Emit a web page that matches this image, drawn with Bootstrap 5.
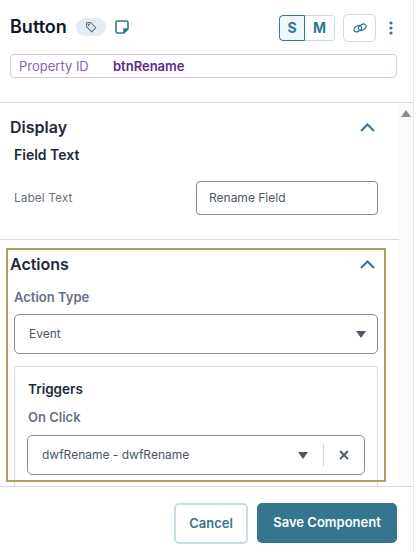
<!DOCTYPE html>
<html lang="en">
<head>
<meta charset="utf-8">
<title>Button</title>
<link href="https://cdn.jsdelivr.net/npm/bootstrap@5.3.0/dist/css/bootstrap.min.css" rel="stylesheet">
<style>
html,body{margin:0;height:552px;overflow:hidden;background:#fff}
body{font-family:Inter,"Liberation Sans",sans-serif;color:#1e293b}
.shell{width:414px;height:552px;border-right:1px solid #e4e8eb}
.head{height:103px;padding:14px 14px 0 10px;border-bottom:1px solid #d5dbe1}
.ttl{font-size:18px;font-weight:600;line-height:24px;color:#101828;margin:0 0 2px}
.tagpill{width:30px;height:18px;border-radius:9px;background:#e4ebf1;margin-left:9px;margin-bottom:2px}
.notei{margin-left:9px;margin-bottom:2px}
.sizes{height:26px}
.szbtn{font-size:14px;font-weight:700;line-height:24px;color:#34768e;border:1px solid #c8dde4;background:#fff;padding:0;height:26px}
.szs{width:26px;background:#eff7fb;border-color:#34768e;border-radius:4px 0 0 4px}
.szm{width:30px;border-left:0;border-radius:0 4px 4px 0}
.lnk{width:33px;height:28px;border:1px solid #c8dde4;border-radius:5px;padding:0;background:#fff;margin-left:8px}
.kebab{width:16px;margin-left:7px}
.propbar{margin-top:12px;height:24px;width:387px;border:1px solid #dcc6e8;border-radius:4px;padding-left:8px;font-size:13px;line-height:22px}
.propk{width:94px;color:#8a63ae}
.propv{font-weight:600;color:#5a2d8c}
.scrollzone{height:383px;overflow:hidden}
.contents{width:399px}
.scbar{width:14px;background:#fbfbfb;padding-top:7px}
.sec1{height:137px;border-bottom:1px solid #d5dfe3;padding:12px 0 0 10px}
.sech{font-size:16px;font-weight:600;line-height:24px;color:#1e293b;margin:0}
.chev{margin-right:24px}
.subh{font-size:14px;font-weight:600;line-height:20px;margin:6px 0 0 4px;color:#1e293b}
.lblrow{margin:16px 0 0 4px;height:34px}
.lbltext{font-size:12px;color:#6b7280;width:182px}
.finput{width:182px;height:34px;font-size:12px;color:#4b5563;border:1px solid #858d96;border-radius:4px;padding:0 12px;line-height:32px}
.goldbox{position:relative;margin:8px 0 0 6px;width:380px;height:234px;padding:2px 0 0 4px}
.goldbox::after{content:"";position:absolute;inset:0;border:2px solid #ae9f66;pointer-events:none}
.acttop{height:28px}
.chev2{margin-right:11px}
.fieldlbl{font-size:13px;font-weight:600;color:#667085;line-height:18px;margin:10px 0 0 4px}
.fsel{height:40px;border:1px solid #858d96;border-radius:5px;font-size:12px;color:#4b5563;padding:0 14px}
.fsel1{width:364px;margin:8px 0 0 4px;padding-right:11px}
.caret{width:0;height:0;border-left:5px solid transparent;border-right:5px solid transparent;border-top:7px solid #4e5a68}
.trigcard{width:364px;height:125px;margin:12px 0 0 4px;border:1px solid #d5dfe3;border-bottom:0;border-radius:4px 4px 0 0;padding:12px 12px 0 12px}
.trigh{font-size:13.5px;font-weight:600;line-height:20px;color:#1e293b;margin:0 0 0 1px}
.fieldlbl2{font-size:13px;font-weight:600;color:#667085;line-height:18px;margin:9px 0 0 1px}
.fsel2{width:338px;margin-top:9px;padding-right:15px}
.vsep{width:1px;height:22px;background:#d0d5da;margin:0 15px}
.foot{height:66px;border-top:1px solid #d5dbe1;padding:16px 16px 0 0}
.btncancel{width:74px;height:41px;font-size:13px;font-weight:600;color:#34768e;background:#fff;border:2px solid #c8dde4;border-radius:5px;padding:0}
.btnsave{width:140px;height:40px;font-size:13px;font-weight:600;color:#fff;background:#34768e;border:0;border-radius:5px;padding:0;margin-left:9px}
</style>
</head>
<body>
<div class="shell">
  <div class="head">
    <div class="d-flex align-items-center">
      <h1 class="ttl">Button</h1>
      <span class="tagpill d-flex align-items-center justify-content-center">
        <svg width="12" height="12" viewBox="0 0 16 16" fill="none" stroke="#4f6f8a" stroke-width="1.4" stroke-linejoin="round"><path d="M2 3.500 2.200 2.200 7.500 2 14.500 9 9 14.500 2 7.500Z"/><circle cx="5" cy="5" r=".8"/></svg>
      </span>
      <svg class="notei" width="14" height="14" viewBox="0 0 14 14" fill="none" stroke="#34768e" stroke-width="1.6" stroke-linejoin="round"><path d="M2.500 1h9A1.500 1.500 0 0 1 13 2.500V9l-4 4H2.500A1.500 1.500 0 0 1 1 11.500V2.500A1.500 1.500 0 0 1 2.500 1Z"/><path d="M13 9H9v4" fill="#34768e"/></svg>
      <div class="ms-auto d-flex align-items-center">
        <div class="sizes d-flex">
          <button class="szbtn szs" type="button">S</button>
          <button class="szbtn szm" type="button">M</button>
        </div>
        <button class="lnk d-flex align-items-center justify-content-center" type="button" aria-label="Link">
          <svg width="14" height="12" viewBox="0 0 14 12" fill="none" stroke="#34768e" stroke-width="1.2"><rect x=".8" y="4.200" width="8" height="5" rx="2.500" transform="rotate(-30 4.800 6.700)"/><rect x="5.200" y="2.800" width="8" height="5" rx="2.500" transform="rotate(-30 9.200 5.300)"/></svg>
        </button>
        <div class="kebab d-flex justify-content-center">
          <svg width="4" height="14" viewBox="0 0 4 14" fill="#34768e"><circle cx="2" cy="2" r="1.600"/><circle cx="2" cy="7" r="1.600"/><circle cx="2" cy="12" r="1.600"/></svg>
        </div>
      </div>
    </div>
    <div class="propbar d-flex"><span class="propk">Property ID</span><span class="propv">btnRename</span></div>
  </div>
  <div class="scrollzone d-flex">
    <div class="contents">
      <section class="sec1">
        <div class="d-flex align-items-center justify-content-between">
          <h2 class="sech">Display</h2>
          <svg class="chev" width="15" height="9" viewBox="0 0 15 9" fill="none" stroke="#34768e" stroke-width="2"><path d="M1 8l6.500-6.500L14 8"/></svg>
        </div>
        <h3 class="subh">Field Text</h3>
        <div class="lblrow d-flex align-items-center">
          <span class="lbltext">Label Text</span>
          <div class="finput">Rename Field</div>
        </div>
      </section>
      <section class="goldbox">
        <div class="acttop d-flex align-items-center justify-content-between">
          <h2 class="sech">Actions</h2>
          <svg class="chev2" width="15" height="9" viewBox="0 0 15 9" fill="none" stroke="#34768e" stroke-width="2"><path d="M1 8l6.500-6.500L14 8"/></svg>
        </div>
        <div class="fieldlbl">Action Type</div>
        <div class="fsel fsel1 d-flex align-items-center justify-content-between"><span>Event</span><span class="caret"></span></div>
        <div class="trigcard">
          <h3 class="trigh">Triggers</h3>
          <div class="fieldlbl2">On Click</div>
          <div class="fsel fsel2 d-flex align-items-center">
            <span>dwfRename - dwfRename</span>
            <span class="caret ms-auto"></span>
            <span class="vsep"></span>
            <svg width="10" height="10" viewBox="0 0 10 10" stroke="#4e5a68" stroke-width="1.800"><path d="M1 1l8 8M9 1l-8 8"/></svg>
          </div>
        </div>
      </section>
    </div>
    <div class="scbar d-flex justify-content-center align-items-start">
      <svg width="10" height="7" viewBox="0 0 10 7" fill="#8a8a8a"><path d="M5 0l5 7H0z"/></svg>
    </div>
  </div>
  <div class="foot d-flex justify-content-end align-items-start">
    <button class="btncancel" type="button">Cancel</button>
    <button class="btnsave" type="button">Save Component</button>
  </div>
</div>
<script src="https://cdn.jsdelivr.net/npm/bootstrap@5.3.0/dist/js/bootstrap.bundle.min.js"></script>
</body>
</html>
